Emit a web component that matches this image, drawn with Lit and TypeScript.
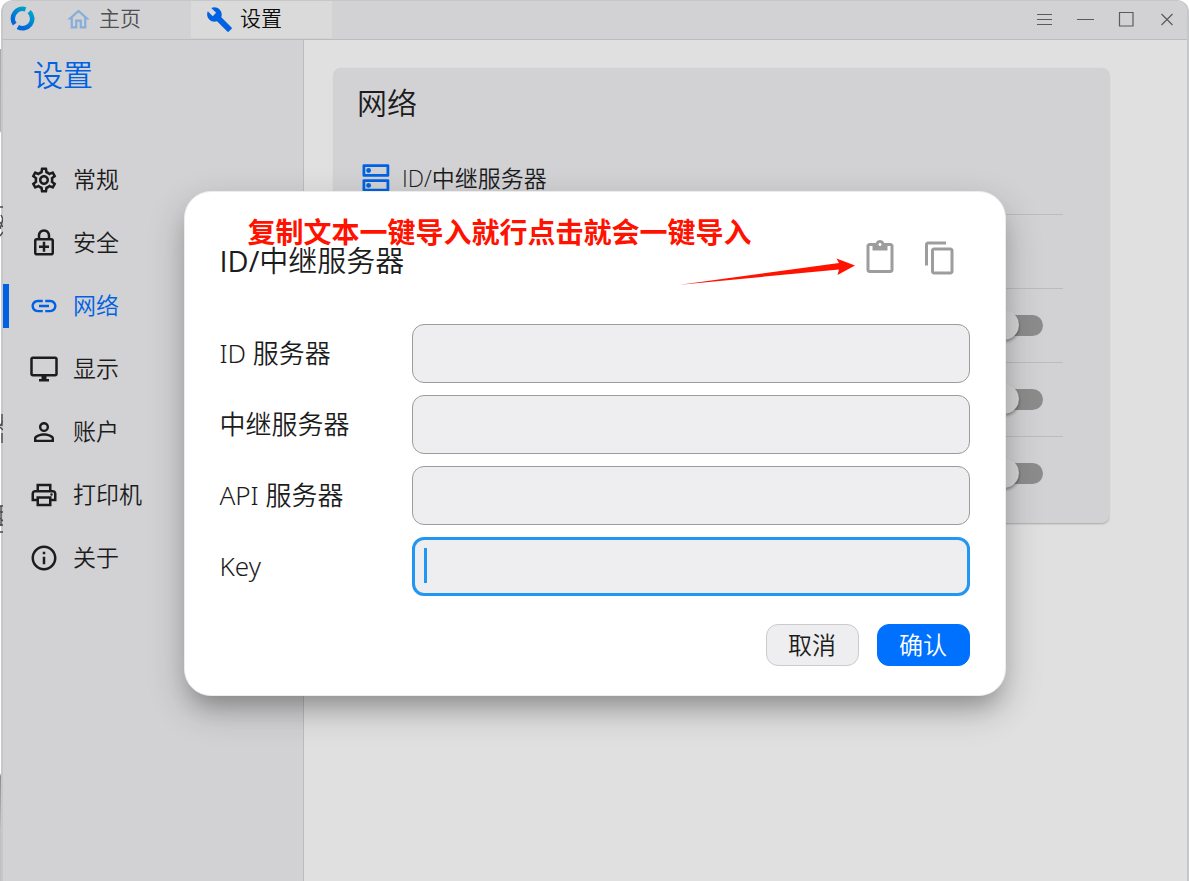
import { LitElement, html, css, svg } from "lit";
import { customElement, property, state } from "lit/decorators.js";
import { classMap } from "lit/directives/class-map.js";

const ICONS: Record<string, string> = {
  home: "M12 5.69l5 4.5V18h-2v-6H9v6H7v-7.81l5-4.5M12 3L2 12h3v8h6v-6h2v6h6v-8h3L12 3z",
  build: "M22.7 19l-9.1-9.1c.9-2.3.4-5-1.5-6.9-2-2-5-2.4-7.4-1.3L9 6 6 9 1.6 4.7C.4 7.1.9 10.1 2.9 12.1c1.9 1.9 4.6 2.4 6.9 1.5l9.1 9.1c.4.4 1 .4 1.4 0l2.3-2.3c.5-.4.5-1.1.1-1.4z",
  settings: "M19.43 12.98c.04-.32.07-.64.07-.98 0-.34-.03-.66-.07-.98l2.11-1.65c.19-.15.24-.42.12-.64l-2-3.46c-.09-.16-.26-.25-.44-.25-.06 0-.12.01-.17.03l-2.49 1c-.52-.4-1.08-.73-1.69-.98l-.38-2.65C14.46 2.18 14.25 2 14 2h-4c-.25 0-.46.18-.49.42l-.38 2.65c-.61.25-1.17.59-1.69.98l-2.49-1c-.06-.02-.12-.03-.18-.03-.17 0-.34.09-.43.25l-2 3.46c-.13.22-.07.49.12.64l2.11 1.65c-.04.32-.07.65-.07.98 0 .33.03.66.07.98l-2.11 1.65c-.19.15-.24.42-.12.64l2 3.46c.09.16.26.25.44.25.06 0 .12-.01.17-.03l2.49-1c.52.4 1.08.73 1.69.98l.38 2.65c.03.24.24.42.49.42h4c.25 0 .46-.18.49-.42l.38-2.65c.61-.25 1.17-.59 1.69-.98l2.49 1c.06.02.12.03.18.03.17 0 .34-.09.43-.25l2-3.46c.12-.22.07-.49-.12-.64l-2.11-1.65zm-1.98-1.71c.04.31.05.52.05.73 0 .21-.02.43-.05.73l-.14 1.13.89.7 1.08.84-.7 1.21-1.27-.51-1.04-.42-.9.68c-.43.32-.84.56-1.25.73l-1.06.43-.16 1.13-.2 1.35h-1.4l-.19-1.35-.16-1.13-1.06-.43c-.43-.18-.83-.41-1.23-.71l-.91-.7-1.06.43-1.27.51-.7-1.21 1.08-.84.89-.7-.14-1.13c-.03-.31-.05-.54-.05-.74s.02-.43.05-.73l.14-1.13-.89-.7-1.08-.84.7-1.21 1.27.51 1.04.42.9-.68c.43-.32.84-.56 1.25-.73l1.06-.43.16-1.13.2-1.35h1.39l.19 1.35.16 1.13 1.06.43c.43.18.83.41 1.23.71l.91.7 1.06-.43 1.27-.51.7 1.21-1.07.85-.89.7.14 1.13zM12 8c-2.21 0-4 1.79-4 4s1.79 4 4 4 4-1.79 4-4-1.79-4-4-4zm0 6c-1.1 0-2-.9-2-2s.9-2 2-2 2 .9 2 2-.9 2-2 2z",
  lock: "M18 8h-1V6c0-2.76-2.24-5-5-5S7 3.24 7 6v2H6c-1.1 0-2 .9-2 2v10c0 1.1.9 2 2 2h12c1.1 0 2-.9 2-2V10c0-1.1-.9-2-2-2zM9 6c0-1.66 1.34-3 3-3s3 1.34 3 3v2H9V6zm9 14H6V10h12v10zm-7-1h2v-3h3v-2h-3v-3h-2v3H8v2h3v3z",
  link: "M3.9 12c0-1.71 1.39-3.1 3.1-3.1h4V7H7c-2.76 0-5 2.24-5 5s2.24 5 5 5h4v-1.9H7c-1.71 0-3.1-1.39-3.1-3.1zM8 13h8v-2H8v2zm9-6h-4v1.9h4c1.71 0 3.1 1.39 3.1 3.1s-1.39 3.1-3.1 3.1h-4V17h4c2.76 0 5-2.24 5-5s-2.24-5-5-5z",
  display: "M21 2H3c-1.1 0-2 .9-2 2v12c0 1.1.9 2 2 2h7v2H8v2h8v-2h-2v-2h7c1.1 0 2-.9 2-2V4c0-1.1-.9-2-2-2zm0 14H3V4h18v12z",
  person: "M12 5.9a2.1 2.1 0 110 4.2 2.1 2.1 0 010-4.2m0 9c2.97 0 6.1 1.46 6.1 2.1v1.1H5.9V17c0-.64 3.13-2.1 6.1-2.1M12 4C9.79 4 8 5.79 8 8s1.79 4 4 4 4-1.79 4-4-1.79-4-4-4zm0 9c-2.67 0-8 1.34-8 4v3h16v-3c0-2.66-5.33-4-8-4z",
  print: "M19 8h-1V3H6v5H5c-1.66 0-3 1.34-3 3v6h4v4h12v-4h4v-6c0-1.66-1.34-3-3-3zM8 5h8v3H8V5zm8 12v2H8v-4h8v2zm2-2v-2H6v2H4v-4c0-.55.45-1 1-1h14c.55 0 1 .45 1 1v4h-2zM17 11.5a1 1 0 102 0 1 1 0 10-2 0z",
  info: "M11 7h2v2h-2zm0 4h2v6h-2zm1-9C6.48 2 2 6.48 2 12s4.48 10 10 10 10-4.48 10-10S17.52 2 12 2zm0 18c-4.41 0-8-3.59-8-8s3.59-8 8-8 8 3.59 8 8-3.59 8-8 8z",
  paste: "M19 2h-4.18C14.4.84 13.3 0 12 0c-1.3 0-2.4.84-2.82 2H5c-1.1 0-2 .9-2 2v16c0 1.1.9 2 2 2h14c1.1 0 2-.9 2-2V4c0-1.1-.9-2-2-2zm-7 0c.55 0 1 .45 1 1s-.45 1-1 1-1-.45-1-1 .45-1 1-1zm7 18H5V4h2v3h10V4h2v16z",
  copy: "M16 1H4c-1.1 0-2 .9-2 2v14h2V3h12V1zm3 4H8c-1.1 0-2 .9-2 2v14c0 1.1.9 2 2 2h11c1.1 0 2-.9 2-2V7c0-1.1-.9-2-2-2zm0 16H8V7h11v14z",
};

@customElement("md-icon")
class MdIcon extends LitElement {
  @property() name = "";
  static styles = css`
    :host { display: block; width: 30px; height: 30px; flex: none; }
    svg { display: block; width: 100%; height: 100%; fill: currentColor; }
  `;
  render() {
    return html`<svg viewBox="0 0 24 24" aria-hidden="true">${svg`<path d=${ICONS[this.name]}></path>`}</svg>`;
  }
}

@customElement("title-bar")
class TitleBar extends LitElement {
  static styles = css`
    :host { display: flex; height: 38px; background: #d2d2d4; border-bottom: 1px solid #bcbcbe; }
    button { font: inherit; color: inherit; background: none; border: 0; padding: 0; cursor: pointer; }
    .logo { display: block; width: 26px; height: 26px; margin: 4px 15px 0 6px; flex: none; fill: none; }
    .tab { display: flex; align-items: center; gap: 7px; width: 141px; height: 37px; padding-left: 15px; font-size: 21px; color: #505051; }
    .tab span { padding-bottom: 5px; }
    .tab md-icon { width: 27px; height: 27px; color: #86aedb; }
    .active { background: #dadadb; color: #0c0c0c; }
    .active md-icon { color: #0062e3; }
    .controls { display: flex; margin-left: auto; }
    .controls button { display: grid; place-items: center; width: 41px; height: 36px; }
    .controls svg { width: 18px; height: 18px; fill: none; stroke: #5b5b5d; stroke-width: 1.2; }
  `;
  render() {
    return html`
      <svg class="logo" viewBox="0 0 26 26" aria-hidden="true">
        <defs>
          <linearGradient id="ring" gradientUnits="userSpaceOnUse" x1="13" y1="24" x2="13" y2="2">
            <stop offset="0.2" stop-color="#00aac4"></stop>
            <stop offset="1" stop-color="#0068dc"></stop>
          </linearGradient>
          <linearGradient id="shade" gradientUnits="userSpaceOnUse" x1="6" y1="23" x2="20" y2="3">
            <stop offset="0.2" stop-color="#0068dc"></stop>
            <stop offset="1" stop-color="#00aac4"></stop>
          </linearGradient>
        </defs>
        <g stroke="url(#shade)" stroke-width="4.6">
          <path d="M16.600 4.400A9.600 9.600 0 0 0 5.700 19.100"></path>
          <path d="M20.200 6.600A9.600 9.600 0 0 1 8.800 21.900"></path>
        </g>
      </svg>
      <button class="tab"><md-icon name="home"></md-icon><span>主页</span></button>
      <button class="tab active"><md-icon name="build"></md-icon><span>设置</span></button>
      <div class="controls">
        <button aria-label="菜单"><svg viewBox="0 0 18 18"><path d="M2 4.5h15M2 9.5h15M2 14.5h15"></path></svg></button>
        <button aria-label="最小化"><svg viewBox="0 0 18 18"><path d="M1 9.5h17"></path></svg></button>
        <button aria-label="最大化"><svg viewBox="0 0 18 18"><path d="M2.5 2.5h13.5v13.5h-13.5z"></path></svg></button>
        <button aria-label="关闭"><svg viewBox="0 0 18 18"><path d="M3.5 4l11 11M14.5 4l-11 11"></path></svg></button>
      </div>
    `;
  }
}

@customElement("side-nav")
class SideNav extends LitElement {
  @state() current = "网络";
  items = [
    ["settings", "常规"],
    ["lock", "安全"],
    ["link", "网络"],
    ["display", "显示"],
    ["person", "账户"],
    ["print", "打印机"],
    ["info", "关于"],
  ];
  static styles = css`
    :host { display: block; width: 300px; flex: none; background: #d2d2d4; border-right: 1px solid #bcbcbe; }
    h1 { margin: 13px 0 61px 30px; font-size: 30px; line-height: 44px; font-weight: inherit; color: #0062e3; }
    nav { display: flex; flex-direction: column; gap: 19px; }
    .item { display: flex; align-items: center; gap: 14px; height: 44px; padding-left: 20px; border-left: 6px solid transparent;
      font-size: 23px; color: #1c1c1d; text-decoration: none; }
    .item span { padding-bottom: 4px; }
    .current { border-color: #0062e3; color: #0062e3; }
  `;
  render() {
    return html`
      <h1>设置</h1>
      <nav>
        ${this.items.map(
          ([icon, label]) => html`<a
            href="#"
            class=${classMap({ item: true, current: label === this.current })}
            @click=${(e: Event) => {
              e.preventDefault();
              this.current = label;
            }}
            ><md-icon name=${icon}></md-icon><span>${label}</span></a>`
        )}
      </nav>
    `;
  }
}

@customElement("network-card")
class NetworkCard extends LitElement {
  static styles = css`
    :host { display: block; background: #d2d2d4; border-radius: 7px; padding: 13px 46px 13px 23px; box-shadow: 0 1px 2px rgba(0, 0, 0, 0.25); }
    h2 { margin: 0 0 16px; font-size: 30px; line-height: 44px; font-weight: inherit; color: #1c1c1d; }
    .row { display: flex; align-items: center; height: 73px; padding: 0 20px 0 5px; border-bottom: 1px solid #bcbcbe; font-size: 23px; color: #1c1c1d; }
    .row:last-child { border-bottom: 0; }
    .row span { padding-bottom: 2px; }
    .server { width: 28px; height: 28px; margin-right: 12px; fill: none; stroke: #0062e3; }
    .switch { appearance: none; position: relative; width: 50px; height: 21px; margin: 0 0 0 auto; border-radius: 11px; background: #8c8c8c; }
    .switch::before { content: ""; position: absolute; left: -4px; top: -5px; width: 30px; height: 30px; border-radius: 50%;
      background: #d6d6d6; box-shadow: 0 2px 3px rgba(0, 0, 0, 0.35); }
  `;
  render() {
    return html`
      <h2>网络</h2>
      <div class="row">
        <svg class="server" viewBox="0 0 28 28" aria-hidden="true">
          <path stroke-width="2.8" stroke-linejoin="round" d="M1.900 1.600h24v9.800h-24zM1.900 16.600h24v9.600h-24z"></path>
          <g fill="#0062e3" stroke="none"><circle cx="6.6" cy="6.5" r="2.4"></circle><circle cx="6.6" cy="21.4" r="2.4"></circle></g>
        </svg>
        <span>ID/中继服务器</span>
      </div>
      <div class="row"></div>
      <div class="row"><input class="switch" type="checkbox" role="switch" aria-label="WebSocket" /></div>
      <div class="row"><input class="switch" type="checkbox" role="switch" aria-label="UDP" /></div>
      <div class="row"><input class="switch" type="checkbox" role="switch" aria-label="TLS" /></div>
    `;
  }
}

@customElement("server-dialog")
class ServerDialog extends LitElement {
  fields = [
    ["id", "ID 服务器"],
    ["relay", "中继服务器"],
    ["api", "API 服务器"],
    ["key", "Key"],
  ];
  static styles = css`
    :host { position: relative; display: block; box-sizing: border-box; width: 822px; max-width: 94%; padding: 36px 35px 29px; background: #fff;
      border: 1px solid #ececed; border-radius: 27px; color: #1c1c1d;
      box-shadow: 0 16px 22px -8px rgba(0, 0, 0, 0.22), 0 14px 36px 2px rgba(0, 0, 0, 0.2); }
    .head { display: flex; align-items: center; height: 60px; margin-bottom: 36px; }
    h2 { margin: 0 auto 0 0; padding-top: 5px; font-size: 29px; line-height: 42px; font-weight: inherit; }
    .latin { font-weight: 400; }
    .tool { display: grid; place-items: center; width: 60px; height: 60px; padding: 0; border: 0; background: none; color: #9d9d9d; cursor: pointer; }
    .tool md-icon { width: 36px; height: 36px; }
    .fields { display: grid; grid-template-columns: 192px 1fr; row-gap: 12px; align-items: center; }
    label { font-family: "Noto Sans", "Noto Sans CJK SC", sans-serif; font-size: 26px; line-height: 36px; padding-bottom: 2px; }
    .box { position: relative; display: flex; font-size: 26px; }
    input { flex: 1; min-width: 0; box-sizing: border-box; height: 59px; padding: 0 12px; border: 1px solid #9c9c9d; border-radius: 12px;
      background: #eeeef0; font: inherit; color: inherit; outline: none; }
    .focused input { border: 3px solid #2196f3; }
    .focused::after { content: ""; position: absolute; left: 12px; top: 11px; width: 3px; height: 35px; background: #2196f3; }
    .actions { display: flex; justify-content: flex-end; gap: 18px; margin-top: 28px; }
    .btn { width: 93px; height: 42px; padding: 0; border: 1px solid #cbcbcd; border-radius: 12px; background: #eeeef0; font: inherit; font-size: 24px; line-height: 36px; color: #1c1c1d; }
    .primary { border-color: #0071ff; background: #0071ff; color: #fff; }
    .note { position: absolute; left: 63px; top: 20px; margin: 0; font-size: 28px; line-height: 40px; font-weight: 700; color: #ff1200; white-space: nowrap; }
    .arrow { position: absolute; left: 493px; top: 64px; width: 180px; height: 32px; fill: #ff1200; pointer-events: none; }
  `;
  render() {
    return html`
      <div class="head">
        <h2><span class="latin">ID/</span>中继服务器</h2>
        <button class="tool" aria-label="导入"><md-icon name="paste"></md-icon></button>
        <button class="tool" aria-label="导出"><md-icon name="copy"></md-icon></button>
      </div>
      <div class="fields">
        ${this.fields.map(
          ([id, label]) => html`
            <label for=${id}>${label}</label>
            <span class=${classMap({ box: true, focused: id === "key" })}><input id=${id} type="text" /></span>
          `
        )}
      </div>
      <div class="actions">
        <button class="btn">取消</button>
        <button class="btn primary">确认</button>
      </div>
      <p class="note">复制文本一键导入就行点击就会一键导入</p>
      <svg class="arrow" viewBox="0 0 180 32" aria-hidden="true">
        <path d="M2 28.700L161 13.500L159.500 19L177 9.600L158.500 2.500L161 7z"></path>
      </svg>
    `;
  }
}

@customElement("app-root")
class AppRoot extends LitElement {
  static styles = css`
    :host { position: relative; display: block; box-sizing: border-box; min-height: 100vh; padding: 0 0 0 1px; overflow: hidden;
      background: linear-gradient(#fff 49px, #a9a9ab 49px, #b4b4b6 131px, #fff 133px, #fff 773px, #8c8c8c 776px, #c0c0c0 830px);
      font-family: "Open Sans", "Noto Sans CJK SC", sans-serif; font-weight: 350; }
    .window { display: flex; flex-direction: column; min-height: 100vh; box-sizing: border-box; border: solid #c6c7c8; border-width: 1px 2px 0;
      border-radius: 12px 12px 0 0; overflow: hidden; background: #e0e0e0; }
    .body { display: flex; flex: 1; }
    main { flex: 1; min-width: 0; padding: 28px 78px 28px 30px; }
    .behind { position: absolute; left: 0; top: 200px; width: 3px; height: 340px; fill: none; stroke: #4a4a4b; stroke-width: 1.4; }
    .overlay { position: absolute; inset: 0; display: flex; align-items: center; justify-content: center; padding-top: 6px; }
  `;
  render() {
    return html`
      <div class="window">
        <title-bar></title-bar>
        <div class="body">
          <side-nav></side-nav>
          <main><network-card></network-card></main>
        </div>
      </div>
      <svg class="behind" viewBox="0 0 3 340" aria-hidden="true">
        <path d="M0 7h3M1 15l2 4M0 22l3 5M3 19l-3 10M0 36l3-4M2 214v12M0 226l3-5M0 227l3 3M2 233v10M0 306h3M0 312h3M1 306v20M0 318l3 3M0 325h3M0 332h3"></path>
      </svg>
      <div class="overlay"><server-dialog role="dialog" aria-label="ID/中继服务器"></server-dialog></div>
    `;
  }
}
